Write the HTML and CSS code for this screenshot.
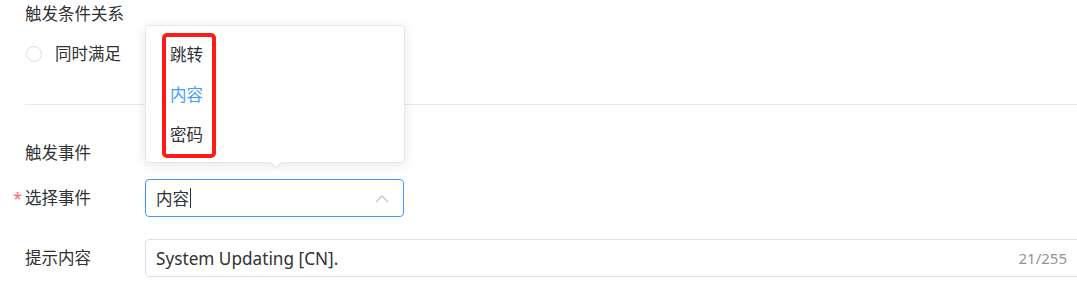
FILE: index.html
```html
<!DOCTYPE html>
<html lang="zh">
<head>
<meta charset="utf-8">
<link rel="stylesheet" href="styles.css">
</head>
<body>
<div class="page">
  <div class="section-title">触发条件关系</div>
  <div class="radio-row">
    <span class="radio"></span>
    <span class="radio-label">同时满足</span>
  </div>
  <div class="divider"></div>
  <div class="section-title second">触发事件</div>
  <div class="form-row first-row">
    <div class="label"><span class="required">*</span>选择事件</div>
    <div class="select">
      <span class="select-text">内容</span><span class="caret"></span>
      <svg class="chevron" width="14" height="9" viewBox="0 0 14 9"><polyline points="1,8 7,2 13,8" fill="none" stroke="#c0c4cc" stroke-width="1.3"/></svg>
    </div>
  </div>
  <div class="form-row second-row">
    <div class="label">提示内容</div>
    <div class="input">
      <span class="input-text">System Updating [CN].</span>
      <span class="count">21/255</span>
    </div>
  </div>

  <div class="popover">
    <ul class="menu">
      <li class="item">跳转</li>
      <li class="item active">内容</li>
      <li class="item">密码</li>
    </ul>
    <div class="arrow"></div>
  </div>
  <div class="highlight"></div>
</div>
</body>
</html>
```

FILE: styles.css
```css
html, body {
  margin: 0;
  padding: 0;
  background: #ffffff;
  overflow: hidden;
}
body {
  width: 1077px;
  height: 282px;
  font-family: "Noto Sans", "Noto Sans CJK SC", sans-serif;
  font-size: 16.5px;
  color: #303133;
}
.page {
  position: relative;
  padding-left: 25px;
  width: 1100px;
}
.section-title {
  height: 28px;
  line-height: 28px;
}
.section-title.second {
  margin-top: 34px;
}
.radio-row {
  margin-top: 12px;
  height: 28px;
  display: flex;
  align-items: center;
}
.radio {
  width: 14px;
  height: 14px;
  border: 1px solid #dcdfe6;
  border-radius: 50%;
  margin-left: 1px;
  box-sizing: content-box;
}
.radio-label {
  margin-left: 13px;
  line-height: 28px;
}
.divider {
  margin-top: 36px;
  height: 1px;
  width: 1052px;
  background: #e6e8ee;
}
.form-row {
  display: flex;
  align-items: center;
}
.first-row { margin-top: 12px; }
.second-row { margin-top: 22px; }
.label {
  width: 120px;
  flex-shrink: 0;
  line-height: 38px;
}
.required {
  color: #f56c6c;
  margin-left: -12px;
  margin-right: 4px;
  display: inline-block;
  width: 8px;
}
.select {
  box-sizing: border-box;
  width: 259px;
  height: 38px;
  border: 1px solid #409eff;
  border-radius: 4px;
  display: flex;
  align-items: center;
  padding-left: 10px;
  padding-right: 14px;
  flex-shrink: 0;
}
.select-text {
  color: #303133;
}
.caret {
  display: inline-block;
  width: 1px;
  height: 20px;
  background: #303133;
  margin-left: 1px;
}
.chevron {
  margin-left: auto;
}
.input {
  box-sizing: border-box;
  width: 945px;
  height: 38px;
  border: 1px solid #dcdfe6;
  border-radius: 4px;
  display: flex;
  align-items: center;
  padding-left: 10px;
  padding-right: 22px;
  flex-shrink: 0;
}
.input-text {
  color: #303133;
  font-size: 17.2px;
}
.count {
  margin-left: auto;
  color: #909399;
  font-size: 15px;
}
.popover {
  position: absolute;
  left: 145px;
  top: 25px;
  width: 260px;
  height: 138px;
  box-sizing: border-box;
  background: #fff;
  border: 1px solid #e4e7ed;
  border-radius: 4px;
  box-shadow: 0 2px 12px rgba(0, 0, 0, 0.1);
}
.menu {
  list-style: none;
  margin: 0;
  padding: 9px 0 0 0;
}
.item {
  height: 40px;
  line-height: 40px;
  padding-left: 24px;
  color: #303133;
}
.item.active {
  color: #409eff;
}
.arrow {
  position: absolute;
  left: 123px;
  bottom: -7px;
  width: 0;
  height: 0;
  border-left: 7px solid transparent;
  border-right: 7px solid transparent;
  border-top: 7px solid #e4e7ed;
}
.arrow::after {
  content: "";
  position: absolute;
  left: -6px;
  top: -8px;
  border-left: 6px solid transparent;
  border-right: 6px solid transparent;
  border-top: 6px solid #fff;
}
.highlight {
  position: absolute;
  left: 162px;
  top: 33px;
  width: 54px;
  height: 125px;
  box-sizing: border-box;
  border: 4px solid #ff1a1a;
  border-radius: 5px;
}
```
